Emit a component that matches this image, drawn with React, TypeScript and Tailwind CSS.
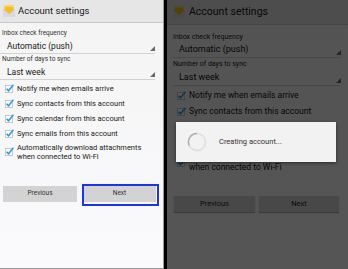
import React from "react"

function MailIcon({ size }: { size: number }) {
    return (
        <svg width={size} height={size} viewBox="0 0 12 12">
            <rect x="0" y="4" width="12" height="8" fill="#d9d6e6" />
            <path d="M0 4 L6 9 L12 4" fill="#c7c3d8" />
            <path d="M1.5 0.5 H10.5 V4 C10.5 6 8 7.5 6 8.5 C4 7.5 1.5 6 1.5 4 Z" fill="#f3c21a" />
            <path d="M1.5 0.5 H10.5 V2 H1.5 Z" fill="#f7d85a" />
        </svg>
    )
}

function Check({ size }: { size: number }) {
    return (
        <svg width={size} height={size} viewBox="0 0 10 10" className="shrink-0">
            <rect x="0.5" y="1.5" width="8" height="8" fill="#ffffff" stroke="#b5b5b5" strokeWidth="0.8" />
            <path d="M1.8 5.2 L4 7.6 L9.4 0.8" fill="none" stroke="#2a9de0" strokeWidth="1.8" strokeLinejoin="round" />
        </svg>
    )
}

function Corner() {
    return (
        <svg width="5" height="5" viewBox="0 0 5 5" className="absolute right-0 bottom-[2px]">
            <path d="M5 0 L5 5 L0 5 Z" fill="#6a6a6a" />
        </svg>
    )
}

const items = [
    "Notify me when emails arrive",
    "Sync contacts from this account",
    "Sync calendar from this account",
    "Sync emails from this account",
]

function LeftScreen() {
    return (
        <div className="flex h-full w-[163px] flex-col border-b border-[#9a9a9a] bg-gradient-to-b from-[#f4f4f4] to-[#fafafd]">
            {/* Title */}
            <div className="flex h-[23px] items-center gap-[3px] border-b border-[#c8c8c8] bg-[#e6e6e6] pl-[3px]">
                <MailIcon size={12} />
                <span className="text-[9.5px] text-[#1a1a1a]">Account settings</span>
            </div>

            <div className="mt-[5px] flex h-[12px] items-center pl-[2px] text-[6.5px] text-[#333]">Inbox check frequency</div>
            <div className="relative mr-[8px] flex h-[14px] items-center border-b border-[#d2d2d2] pl-[7px] text-[8.5px] text-[#1a1a1a]">
                Automatic (push)
                <Corner />
            </div>
            <div className="flex h-[12px] items-center pl-[2px] text-[6.5px] text-[#333]">Number of days to sync</div>
            <div className="relative mr-[8px] flex h-[14px] items-center border-b border-[#d2d2d2] pl-[7px] text-[8.5px] text-[#1a1a1a]">
                Last week
                <Corner />
            </div>

            <div className="mt-[1px] flex flex-col">
                {items.map((t) => (
                    <div key={t} className="flex h-[15px] items-center gap-[3px] pl-[5px] text-[7.5px] text-[#222]">
                        <Check size={9} />
                        {t}
                    </div>
                ))}
                <div className="flex items-center gap-[3px] pl-[5px] pt-[1.5px] text-[7.5px] leading-[9px] text-[#222]">
                    <Check size={9} />
                    <span>
                        Automatically download attachments
                        <br />
                        when connected to Wi-Fi
                    </span>
                </div>
            </div>

            <div className="mt-[25px] flex gap-[6px] pl-[3px]">
                <div className="flex h-[16px] w-[74px] items-center justify-center bg-[#d3d3d3] text-[6.5px] text-[#333]">Previous</div>
                <div className="relative flex h-[16px] w-[73px] items-center justify-center bg-[#d3d3d3] text-[6.5px] text-[#333]">
                    Next
                    <div className="absolute -top-[2px] -left-[1px] -right-[3px] -bottom-[4px] border-2 border-[#1d35e6]" />
                </div>
            </div>
        </div>
    )
}

function RightScreen() {
    return (
        <div className="relative h-full flex-1 overflow-hidden">
            <div className="flex h-full flex-col bg-gradient-to-b from-[#f4f4f4] to-[#fafafd]">
                <div className="flex h-[25px] items-center gap-[4px] border-b border-[#c8c8c8] bg-[#e0e0e0] pl-[6px]">
                    <MailIcon size={12} />
                    <span className="text-[10.5px] text-[#1a1a1a]">Account settings</span>
                </div>

                <div className="mt-[6px] flex h-[12px] items-center pl-[6px] text-[7px] text-[#222]">Inbox check frequency</div>
                <div className="relative mr-[7px] ml-[6px] flex h-[15px] items-center border-b border-[#d2d2d2] pl-[6px] text-[9px] text-[#111]">
                    Automatic (push)
                    <Corner />
                </div>
                <div className="flex h-[12px] items-center pl-[6px] text-[7px] text-[#222]">Number of days to sync</div>
                <div className="relative mr-[7px] ml-[6px] flex h-[16px] items-center border-b border-[#d2d2d2] pl-[6px] text-[9px] text-[#111]">
                    Last week
                    <Corner />
                </div>

                <div className="mt-[1px] flex flex-col">
                    {items.map((t) => (
                        <div key={t} className="flex h-[16px] items-center gap-[3px] pl-[10px] text-[8.5px] text-[#111]">
                            <Check size={9} />
                            {t}
                        </div>
                    ))}
                    <div className="flex items-center gap-[3px] pl-[10px] pt-[2px] text-[8.5px] leading-[9.5px] text-[#111]">
                        <Check size={9} />
                        <span>
                            Automatically download attachments
                            <br />
                            when connected to Wi-Fi
                        </span>
                    </div>
                </div>

                <div className="mt-[24px] flex gap-[4px] pl-[7px]">
                    <div className="flex h-[16px] w-[81px] items-center justify-center bg-[#d3d3d3] text-[7.5px] text-[#222] shadow-[0_1px_1px_rgba(0,0,0,0.3)]">Previous</div>
                    <div className="flex h-[16px] w-[80px] items-center justify-center bg-[#d3d3d3] text-[7.5px] text-[#222] shadow-[0_1px_1px_rgba(0,0,0,0.3)]">Next</div>
                </div>
            </div>

            {/* dim */}
            <div className="absolute inset-0 bg-black/[0.66]" />

            {/* progress dialog */}
            <div className="absolute top-[122px] left-[9px] flex h-[40px] w-[160px] items-center gap-[12px] bg-[#f2f2f2] pl-[11px] shadow-[0_1px_3px_rgba(0,0,0,0.5)]">
                <svg width="20" height="20" viewBox="0 0 20 20">
                    <circle cx="10" cy="10" r="8.5" fill="none" stroke="#dedede" strokeWidth="1.5" />
                    <path d="M10 1.5 A8.5 8.5 0 0 0 2.2 13.5" fill="none" stroke="#b0b0b0" strokeWidth="1.5" />
                </svg>
                <span className="text-[7.5px] text-[#333]">Creating account...</span>
            </div>
        </div>
    )
}

export default function App() {
    return (
        <div className="flex h-[269px] w-[348px] bg-black" style={{ fontFamily: "Roboto, 'Liberation Sans', sans-serif" }}>
            <LeftScreen />
            <div className="w-[1px] bg-[#9a9a9a]" />
            <div className="w-[3px] bg-black" />
            <RightScreen />
        </div>
    )
}
